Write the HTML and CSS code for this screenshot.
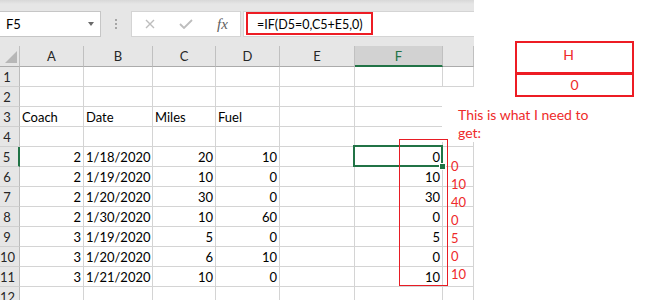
FILE: index.html
```html
<!DOCTYPE html>
<html lang="en">
  <head>
    <meta charset="UTF-8" />
    <link rel="stylesheet" href="styles.css">
  </head>
  <body>
    <div class="page">
      <div class="excel">
        <div class="formula-bar">
          <div class="name-box">
            <span>F5</span>
            <span class="caret"></span>
          </div>
          <div class="grip"><i></i><i></i><i></i></div>
          <div class="fx-buttons">
            <svg width="10" height="10" viewBox="0 0 10 10">
              <path d="M1 1 L9 9 M9 1 L1 9" stroke="#bdbdbd" stroke-width="1.4" fill="none" />
            </svg>
            <svg width="14" height="10" viewBox="0 0 14 10">
              <path d="M1 5 L5 9 L13 1" stroke="#bdbdbd" stroke-width="1.8" fill="none" />
            </svg>
            <span class="fx">fx</span>
          </div>
          <div class="formula-input">
            <span class="formula">=IF(D5=0,C5+E5,0)</span>
          </div>
        </div>

        <div class="sheet">
          <div class="corner"></div>
          <div class="col-head">A</div>
          <div class="col-head">B</div>
          <div class="col-head">C</div>
          <div class="col-head">D</div>
          <div class="col-head">E</div>
          <div class="col-head sel">F</div>
          <div class="col-head"></div>

          <div class="rh">1</div>
          <div class="cell"></div><div class="cell"></div><div class="cell"></div><div class="cell"></div>
          <div class="cell"></div><div class="cell"></div><div class="cell"></div>

          <div class="rh">2</div>
          <div class="cell"></div><div class="cell"></div><div class="cell"></div><div class="cell"></div>
          <div class="cell"></div><div class="cell"></div><div class="cell"></div>

          <div class="rh">3</div>
          <div class="cell">Coach</div><div class="cell">Date</div><div class="cell">Miles</div><div class="cell">Fuel</div>
          <div class="cell"></div><div class="cell"></div><div class="cell"></div>

          <div class="rh">4</div>
          <div class="cell"></div><div class="cell"></div><div class="cell"></div><div class="cell"></div>
          <div class="cell"></div><div class="cell"></div><div class="cell"></div>

          <div class="rh sel">5</div>
          <div class="cell num">2</div><div class="cell num">1/18/2020</div><div class="cell num">20</div><div class="cell num">10</div>
          <div class="cell"></div>
          <div class="cell num active">0<div class="selection"><div class="fill-handle"></div></div></div>
          <div class="cell"></div>

          <div class="rh">6</div>
          <div class="cell num">2</div><div class="cell num">1/19/2020</div><div class="cell num">10</div><div class="cell num">0</div>
          <div class="cell"></div><div class="cell num">10</div><div class="cell"></div>

          <div class="rh">7</div>
          <div class="cell num">2</div><div class="cell num">1/20/2020</div><div class="cell num">30</div><div class="cell num">0</div>
          <div class="cell"></div><div class="cell num">30</div><div class="cell"></div>

          <div class="rh">8</div>
          <div class="cell num">2</div><div class="cell num">1/30/2020</div><div class="cell num">10</div><div class="cell num">60</div>
          <div class="cell"></div><div class="cell num">0</div><div class="cell"></div>

          <div class="rh">9</div>
          <div class="cell num">3</div><div class="cell num">1/19/2020</div><div class="cell num">5</div><div class="cell num">0</div>
          <div class="cell"></div><div class="cell num">5</div><div class="cell"></div>

          <div class="rh">10</div>
          <div class="cell num">3</div><div class="cell num">1/20/2020</div><div class="cell num">6</div><div class="cell num">10</div>
          <div class="cell"></div><div class="cell num">0</div><div class="cell"></div>

          <div class="rh">11</div>
          <div class="cell num">3</div><div class="cell num">1/21/2020</div><div class="cell num">10</div><div class="cell num">0</div>
          <div class="cell"></div><div class="cell num">10</div><div class="cell"></div>

          <div class="rh">12</div>
          <div class="cell"></div><div class="cell"></div><div class="cell"></div><div class="cell"></div>
          <div class="cell"></div><div class="cell"></div><div class="cell"></div>
        </div>
      </div>

      <!-- annotations drawn over the sheet -->
      <div class="note">This is what I need to get:</div>
      <div class="h-box">
        <div class="h-head">H</div>
        <div class="h-val">0</div>
      </div>
      <div class="bracket"></div>
      <div class="expected">0<br>10<br>40<br>0<br>5<br>0<br>10</div>
    </div>
  </body>
</html>
```

FILE: styles.css
```css
* {
  box-sizing: border-box;
}

body {
  margin: 0;
  background: #fff;
  font-family: Lato, "Open Sans", sans-serif;
  color: #000;
}

.page {
  position: relative;
  width: 666px;
  height: 300px;
  overflow: hidden;
}

.excel {
  width: 474px;
}

.formula-bar {
  height: 46px;
  display: flex;
  align-items: flex-start;
  padding-top: 11px;
  background: linear-gradient(#d8d8d8, #e6e6e6 4px);
}

.name-box {
  width: 101px;
  height: 26px;
  display: flex;
  align-items: flex-start;
  padding: 1px 6px 0 6px;
  background: #fff;
  border: 1px solid #c6c6c6;
  border-left: none;
  font-size: 13px;
  line-height: 22px;
}

.caret {
  margin-left: auto;
  margin-top: 9px;
  border-top: 4px solid #6a6a6a;
  border-left: 3.5px solid transparent;
  border-right: 3.5px solid transparent;
}

.grip {
  margin-left: 14px;
  margin-top: 8px;
  display: flex;
  flex-direction: column;
  gap: 2px;
}

.grip i {
  width: 2px;
  height: 2px;
  background: #a6a6a6;
}

.fx-buttons {
  margin-left: 14px;
  width: 110px;
  height: 26px;
  display: flex;
  align-items: center;
  gap: 24px;
  padding-left: 13px;
  background: #fff;
  border: 1px solid #d4d4d4;
}

.fx {
  font-family: "Liberation Serif", serif;
  font-style: italic;
  font-size: 15px;
  color: #5e5e5e;
}

.formula-input {
  flex: 1;
  margin-left: 2px;
  height: 26px;
  padding-left: 2px;
  background: #fff;
  border: 1px solid #d4d4d4;
  border-right: none;
}

.formula {
  display: block;
  width: 127px;
  height: 23px;
  padding: 2px 0 0 9px;
  border: 2px solid #ed1c24;
  font-size: 12.5px;
  line-height: 17px;
}

.sheet {
  display: grid;
  grid-template-columns: 20px 64px 69px 63px 64px 75px 88px 31px;
  grid-template-rows: 21px;
  grid-auto-rows: 20px;
  font-size: 13px;
}

.corner {
  display: flex;
  justify-content: flex-end;
  align-items: flex-end;
  padding: 0 2px 3px 0;
  background: #e6e6e6;
  border-right: 1px solid #c0c0c0;
  border-bottom: 1px solid #ababab;
}

.corner::after {
  content: "";
  border-left: 12px solid transparent;
  border-bottom: 12px solid #b7b7b7;
}

.col-head {
  padding-top: 1px;
  background: #e6e6e6;
  border-right: 1px solid #c0c0c0;
  border-bottom: 1px solid #ababab;
  text-align: center;
  line-height: 19px;
  color: #262626;
}

.col-head.sel {
  background: #d2d2d2;
  color: #217346;
  border-bottom: 2px solid #217346;
}

.rh {
  padding: 1px 5px 0 0;
  background: #e6e6e6;
  border-right: 1px solid #bcbcbc;
  border-bottom: 1px solid #d0d0d0;
  text-align: center;
  line-height: 18px;
  color: #262626;
}

.rh.sel {
  border-right: 2px solid #217346;
}

.cell {
  padding: 1px 2px 0;
  border-right: 1px solid #d4d4d4;
  border-bottom: 1px solid #d4d4d4;
  line-height: 18px;
  white-space: nowrap;
}

.num {
  text-align: right;
}

.active {
  position: relative;
}

.selection {
  position: absolute;
  top: -2px;
  left: -2px;
  right: -1px;
  bottom: -1px;
  border: 2px solid #217346;
}

.fill-handle {
  position: absolute;
  left: 84px;
  top: 16px;
  width: 7px;
  height: 7px;
  background: #217346;
  border: 1px solid #fff;
}

.note {
  position: absolute;
  left: 442px;
  top: 87px;
  width: 160px;
  padding: 19px 0 0 16px;
  background: #fff;
  color: #ee2a2a;
  font-size: 14px;
  line-height: 18px;
}

.h-box {
  position: absolute;
  left: 515px;
  top: 41px;
  width: 119px;
  background: #fff;
  border: 2px solid #ed1c24;
  color: #ee2a2a;
  font-size: 14px;
  text-align: center;
}

.h-head {
  height: 32px;
  padding: 0 12px 5px 0;
  border-bottom: 3px solid #ed1c24;
  line-height: 24px;
}

.h-val {
  line-height: 20px;
}

.bracket {
  position: absolute;
  left: 399px;
  top: 139px;
  width: 49px;
  height: 147px;
  border: 1px solid #e81c24;
}

.expected {
  position: absolute;
  left: 451px;
  top: 157px;
  color: #ee2a2a;
  font-size: 13px;
  line-height: 18px;
}
```
